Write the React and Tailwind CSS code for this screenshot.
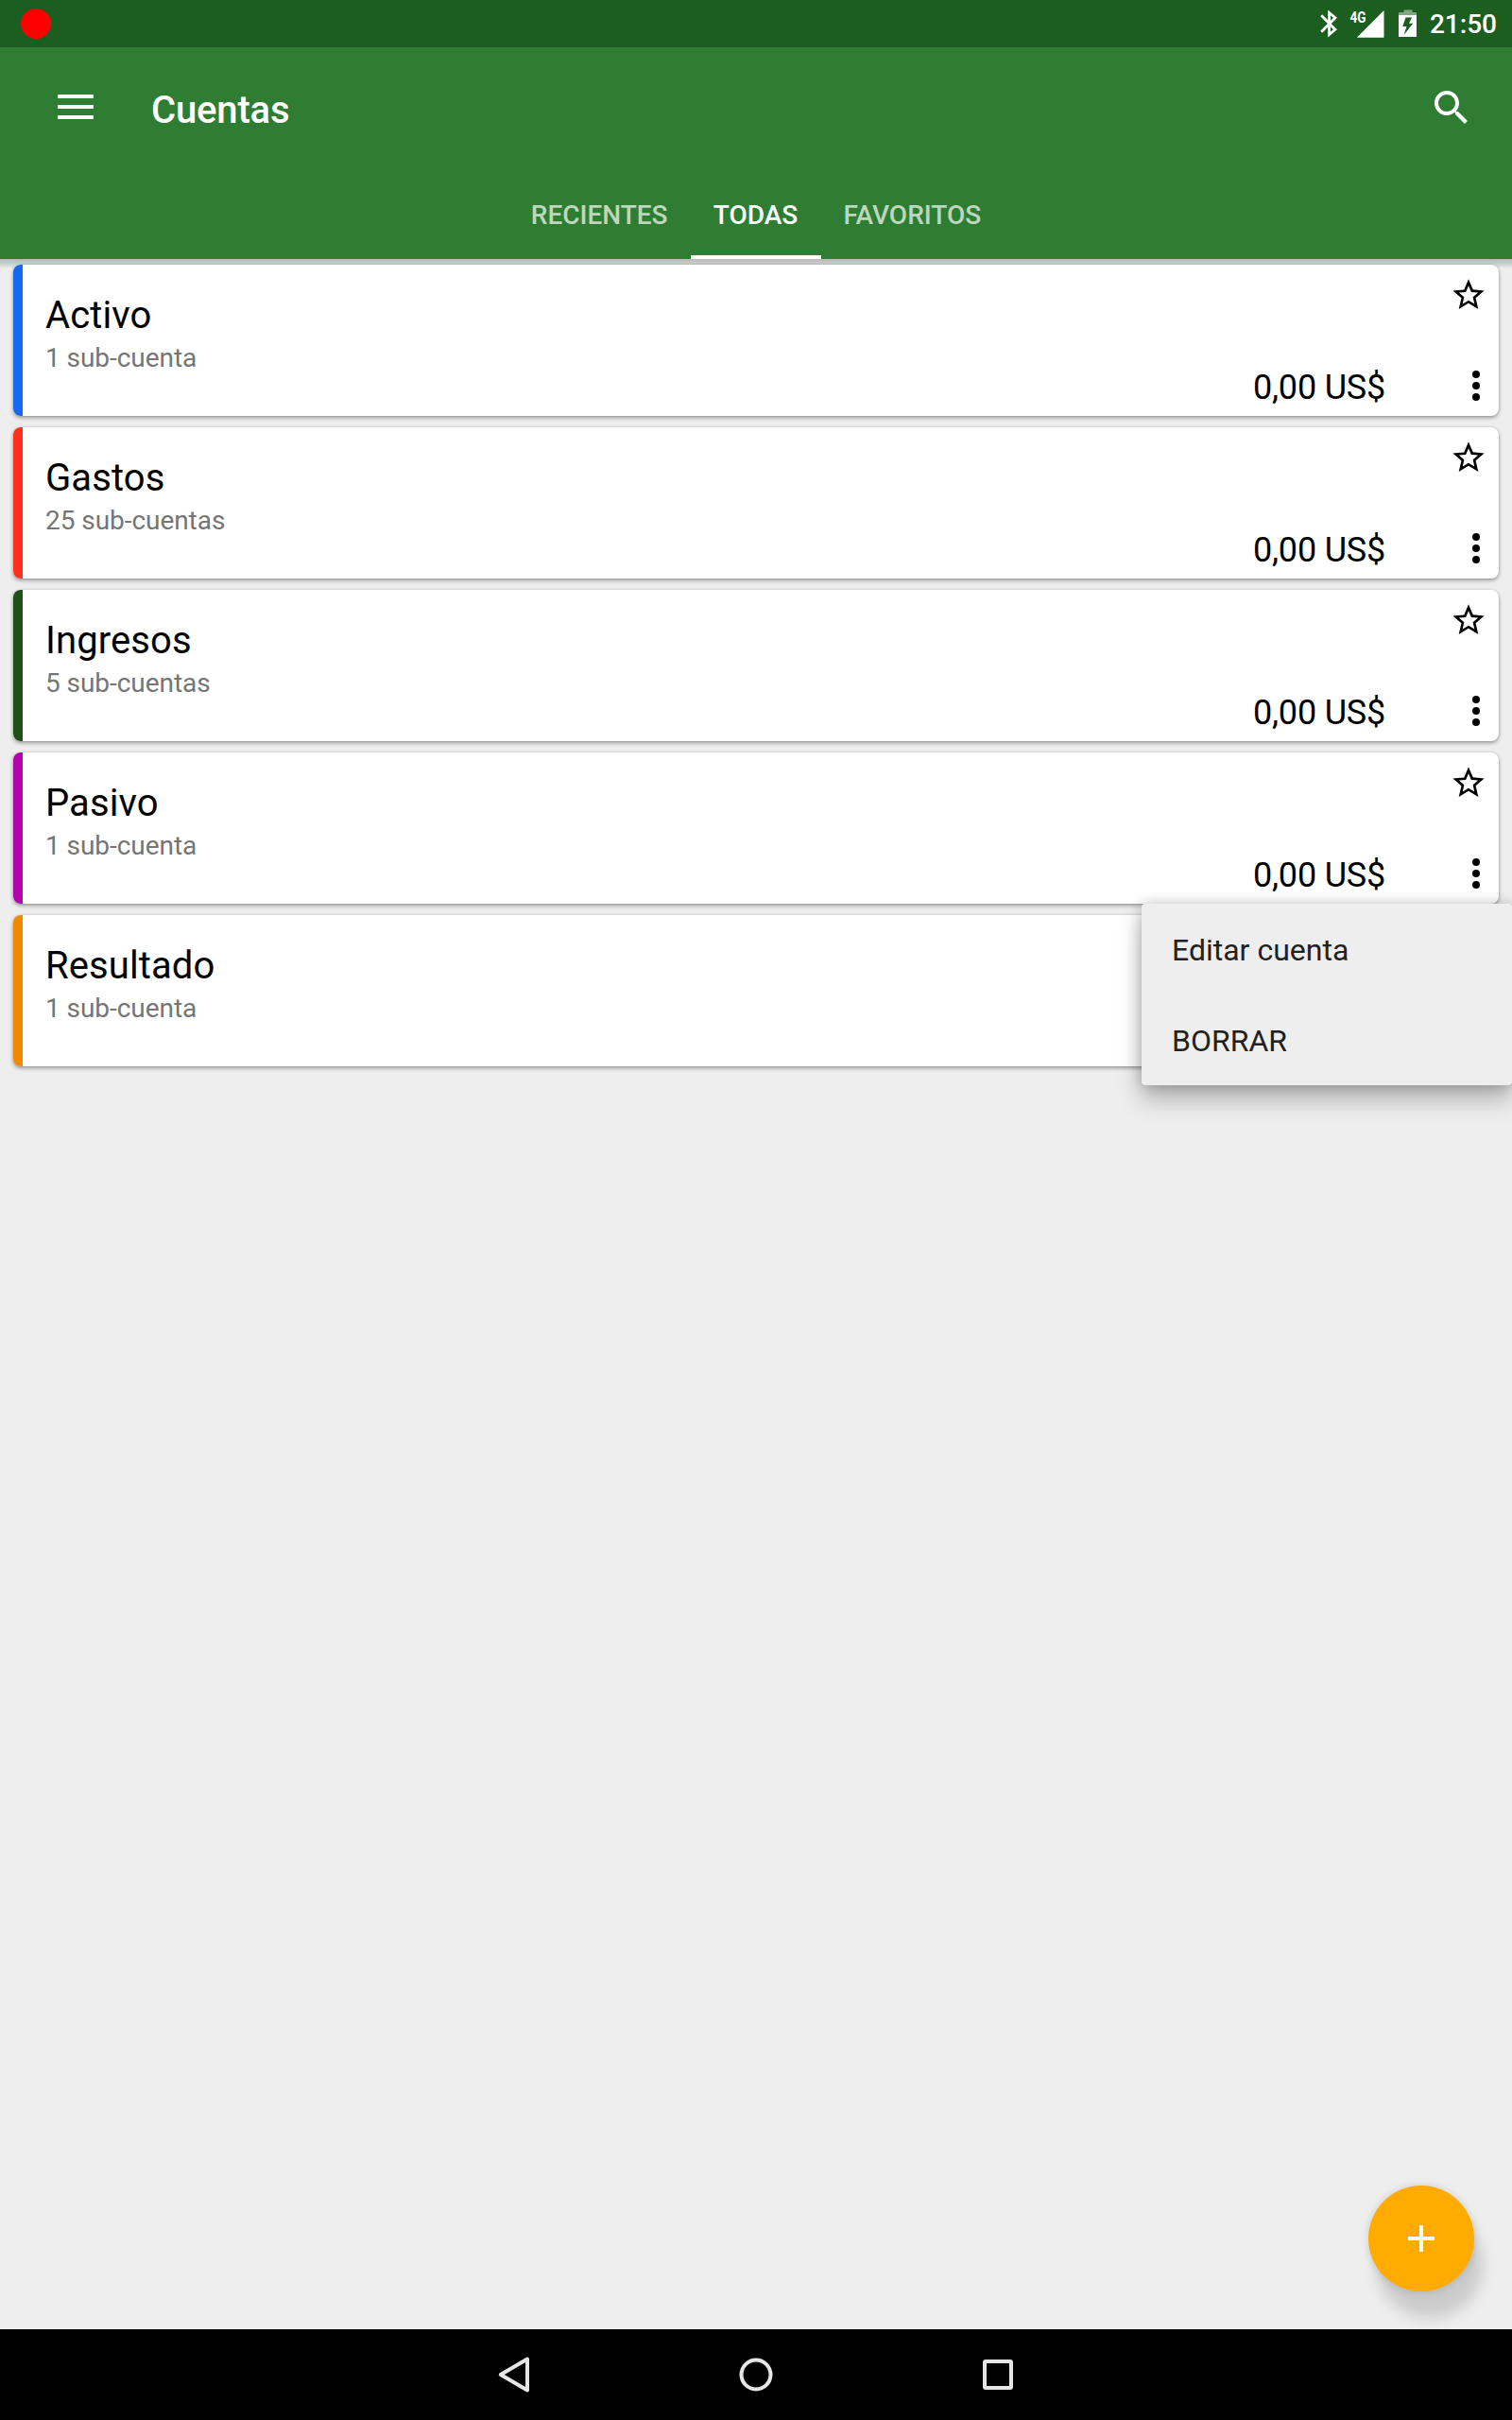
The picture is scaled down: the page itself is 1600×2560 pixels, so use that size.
const accounts = [
  { name: "Activo", sub: "1 sub-cuenta", amount: "0,00 US$", stripe: "bg-[#1569ec]" },
  { name: "Gastos", sub: "25 sub-cuentas", amount: "0,00 US$", stripe: "bg-[#ff311c]" },
  { name: "Ingresos", sub: "5 sub-cuentas", amount: "0,00 US$", stripe: "bg-[#1e5116]" },
  { name: "Pasivo", sub: "1 sub-cuenta", amount: "0,00 US$", stripe: "bg-[#b304ad]" },
  { name: "Resultado", sub: "1 sub-cuenta", amount: "", stripe: "bg-[#ef8900]" },
];

function StatusBar() {
  return (
    <div className="flex h-[50px] items-center bg-[#1b5e20] pl-[22px] pr-4">
      <div className="size-8 rounded-full bg-[#ff0000]" />
      <div className="ml-auto flex items-center">
        <svg className="h-[30px] w-[18px]" viewBox="0 0 18 30" fill="none" stroke="#fff" strokeWidth="2.8">
          <path d="M1.2 6.2 16 21.2 9.6 26.6V3.4L16 8.8 1.2 23.8" />
        </svg>
        <svg className="ml-[13px] h-[30px] w-[37px]" viewBox="0 0 37 30" fill="#fff">
          <path d="M36.500 1v28.700H7.800z" />
          <text x="0.6" y="14" fontFamily="Roboto" fontWeight="700" fontSize="16.5" textLength="17" lengthAdjust="spacingAndGlyphs">4G</text>
        </svg>
        <svg className="ml-[15px] h-[30px] w-5" viewBox="0 0 20 30" fill="#fff">
          <path opacity=".45" d="M5.500.5h9V3H19v3H0V3h5.500z" />
          <path fillRule="evenodd" d="M0 6h19v23H0zM7.500 8.500 4.300 18h4.200L5.600 27 15.200 14.800h-4.300l3.200-6.300z" />
        </svg>
        <span className="ml-[13px] pt-0.5 text-[28px] leading-8 font-medium text-white">21:50</span>
      </div>
    </div>
  );
}

function AppBar() {
  return (
    <header className="relative z-10 flex h-56 flex-col bg-[#2e7d32]">
      <div className="flex h-32 items-center pr-10 pl-14">
        <svg className="h-12 w-12" viewBox="0 0 48 48" fill="#fff">
          <path d="M5.200 10h37.600v4H5.200zM5.200 21h37.600v4H5.200zM5.200 32h37.600v4H5.200z" />
        </svg>
        <h1 className="mt-[5px] ml-14 text-[40px] leading-[48px] font-medium tracking-[-0.15px] text-white">Cuentas</h1>
        <svg className="ml-auto size-12" viewBox="0 0 24 24" fill="#fff">
          <path d="M15.500 14h-.79l-.28-.27C15.410 12.590 16 11.110 16 9.500 16 5.910 13.090 3 9.500 3S3 5.910 3 9.500 5.910 16 9.500 16c1.610 0 3.090-.59 4.230-1.570l.27.28v.79l5 4.990L20.490 19l-4.990-5zm-6 0C7.010 14 5 11.990 5 9.500S7.010 5 9.500 5 14 7.010 14 9.500 11.990 14 9.500 14z" />
        </svg>
      </div>
      <nav className="flex h-24 justify-center text-[28px] leading-8 font-medium text-white/70">
        <div className="flex items-center px-6 pt-1">RECIENTES</div>
        <div className="flex w-[138px] items-center justify-center border-b-4 border-white pt-2 text-white">TODAS</div>
        <div className="flex items-center px-6 pt-1">FAVORITOS</div>
      </nav>
    </header>
  );
}

function AccountCard({ account }) {
  return (
    <div className="flex h-40 overflow-hidden rounded-lg bg-white shadow-[0_2px_4px_rgba(0,0,0,0.36),0_0_2px_rgba(0,0,0,0.15)]">
      <div className={`w-2.5 shrink-0 ${account.stripe}`} />
      <div className="flex grow flex-col pt-[30px] pl-6">
        <span className="text-[40px] leading-[48px] tracking-[0.1px] text-black">{account.name}</span>
        <span className="mt-[5px] text-[28px] leading-8 tracking-[-0.05px] text-[#757575]">{account.sub}</span>
      </div>
      <div className="flex items-end pb-2 text-[36px] leading-[44px] tracking-[-0.2px] text-black">{account.amount}</div>
      <div className="ml-[72px] flex w-12 flex-col justify-between pt-3 pb-2">
        <svg className="-ml-1 size-10" viewBox="0 0 24 24">
          <path d="M22 9.240l-7.190-.62L12 2 9.190 8.630 2 9.240l5.460 4.730L5.820 21 12 17.270 18.180 21l-1.630-7.030L22 9.240zM12 15.400l-3.760 2.270 1-4.280-3.320-2.880 4.380-.38L12 6.100l1.710 4.040 4.380.38-3.320 2.880 1 4.280L12 15.400z" />
        </svg>
        <svg className="size-12" viewBox="0 0 24 24">
          <circle cx="12" cy="6" r="2" />
          <circle cx="12" cy="12" r="2" />
          <circle cx="12" cy="18" r="2" />
        </svg>
      </div>
    </div>
  );
}

function ContextMenu() {
  return (
    <div className="absolute top-[682px] right-0 h-48 w-[392px] rounded bg-[#eeeeee] text-[32px] leading-[40px] text-[#212121] shadow-[0_14px_26px_rgba(0,0,0,0.28),0_0_14px_rgba(0,0,0,0.2)]">
      <div className="flex h-24 items-center pt-0.5 pl-8">Editar cuenta</div>
      <div className="flex h-24 items-center pt-0.5 pl-8">BORRAR</div>
    </div>
  );
}

function NavBar() {
  return (
    <footer className="relative z-10 flex h-24 items-center justify-center gap-52 bg-black">
      <svg className="size-12" viewBox="0 0 48 48" fill="none" stroke="#e6e6e6" strokeWidth="4" strokeLinejoin="round">
        <path d="M38 7.500v33L9.800 24z" />
      </svg>
      <svg className="size-12" viewBox="0 0 48 48" fill="none" stroke="#e6e6e6" strokeWidth="4">
        <circle cx="24" cy="24" r="15.500" />
      </svg>
      <svg className="size-12" viewBox="0 0 48 48" fill="none" stroke="#e6e6e6" strokeWidth="4">
        <rect x="10" y="10" width="28" height="28" rx="1" />
      </svg>
    </footer>
  );
}

export default function App() {
  return (
    <div className="flex h-[2560px] w-[1600px] flex-col overflow-hidden bg-[#eeeeee] font-[Roboto,sans-serif]">
      <StatusBar />
      <AppBar />
      <main className="relative grow bg-[linear-gradient(to_bottom,#bababa_0px,#cccccc_5px,#eeeeee_10px)]">
        <div className="flex flex-col gap-3 px-3.5 pt-1.5">
          {accounts.map((account) => (
            <AccountCard key={account.name} account={account} />
          ))}
        </div>
        <ContextMenu />
        <button className="absolute right-10 bottom-10 flex size-28 items-center justify-center rounded-full bg-[#ffab00] shadow-[9px_28px_16px_rgba(0,0,0,0.15),0_0_10px_rgba(0,0,0,0.14)]">
          <svg className="size-12" viewBox="0 0 48 48" fill="#fff">
            <path d="M22 10h4v12h12v4H26v12h-4V26H10v-4h12z" />
          </svg>
        </button>
      </main>
      <NavBar />
    </div>
  );
}
